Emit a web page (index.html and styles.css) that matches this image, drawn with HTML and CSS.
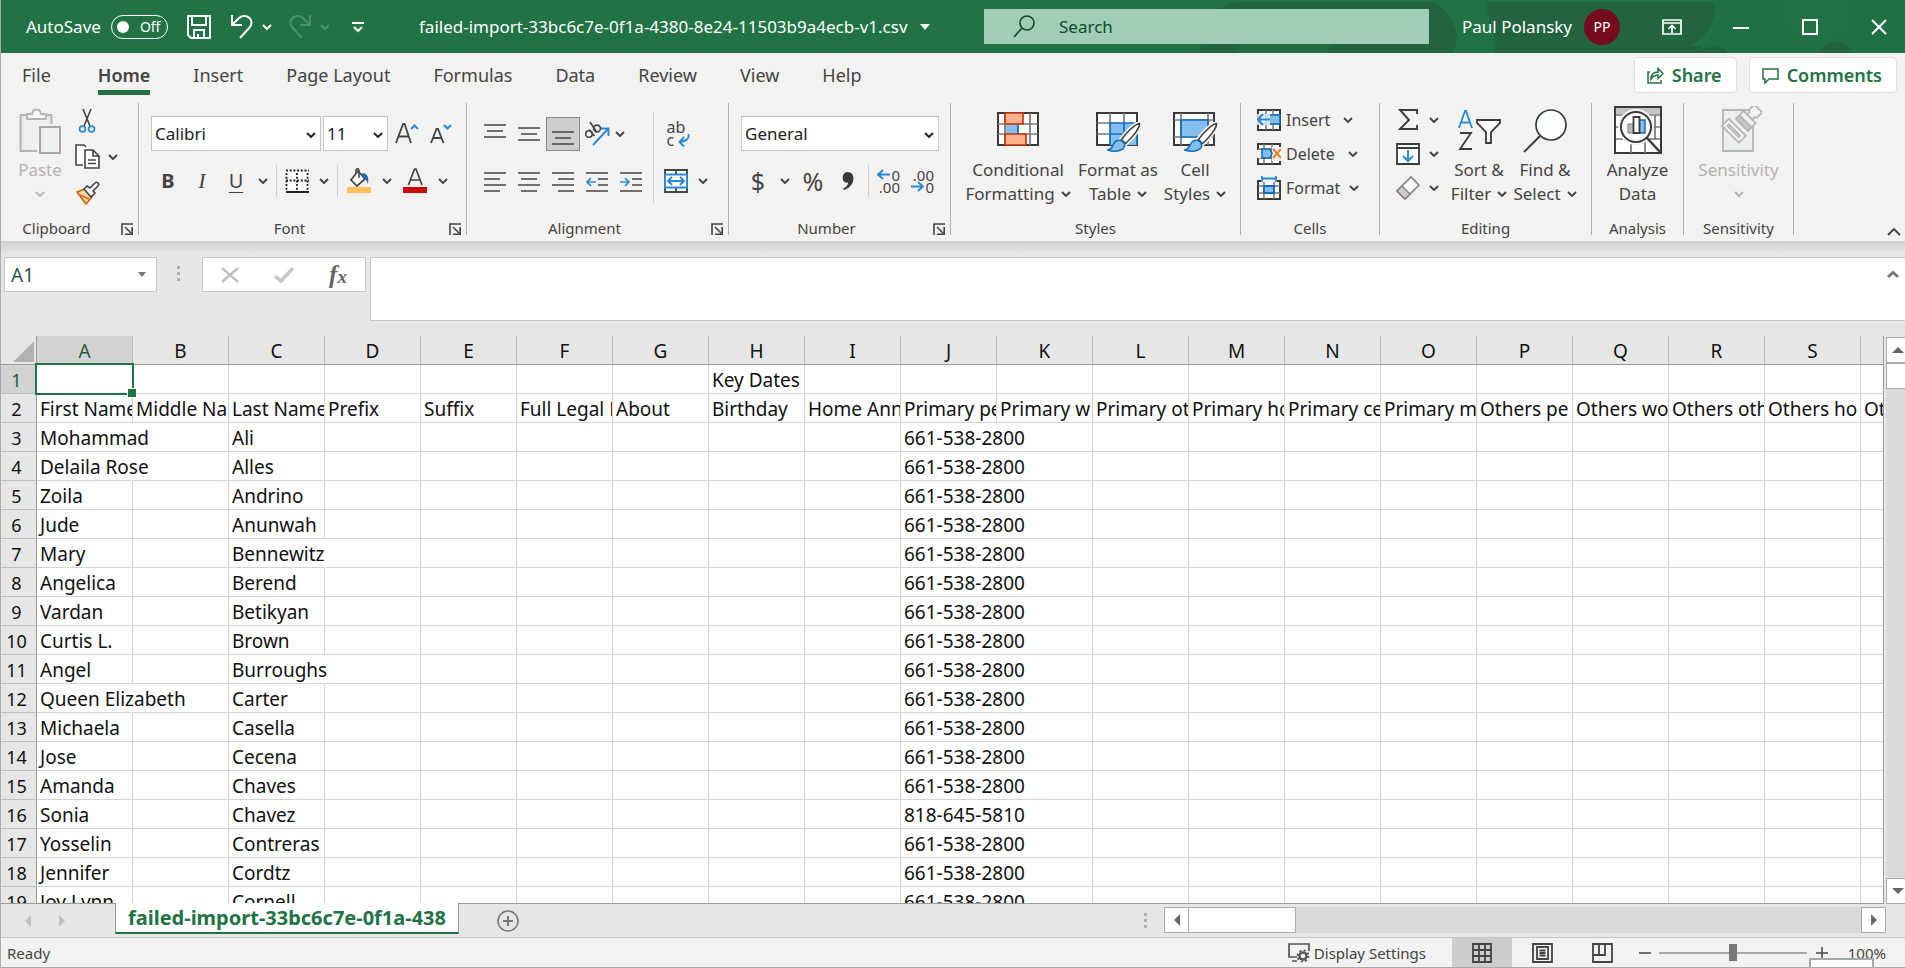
FILE: index.html
```html
<!DOCTYPE html>
<html lang="en">
<head>
<meta charset="utf-8">
<title>failed-import-33bc6c7e-0f1a-4380-8e24-11503b9a4ecb-v1.csv</title>
<link rel="stylesheet" href="styles.css">
</head>
<body>
<svg class="defs" aria-hidden="true">
  <symbol id="chev" viewBox="0 0 10 6"><path d="M1 1l4 4 4-4" fill="none" stroke="currentColor" stroke-width="1.9"/></symbol>
  <symbol id="launch" viewBox="0 0 12 12"><path d="M1 12V1h11M4 4l6 6M11.200 4v7.200H4" fill="none" stroke="currentColor" stroke-width="1.600"/></symbol>
  <symbol id="brush" viewBox="0 0 34 30"><path d="M32.500 1.500C28 2 19 11 14.500 17.500l4 4C25 16 33 6 32.500 1.500z" fill="#fff" stroke="#f3f2f1" stroke-width="5"/><path d="M32.500 1.500C28 2 19 11 14.500 17.500l4 4C25 16 33 6 32.500 1.500z" fill="#fff" stroke="#3b3a39" stroke-width="1.500"/><path d="M1 28c4-1 4-3 5.500-6 1.500-3.500 6-5 9-2.500 3.500 3 2.500 7-1.500 8.500-4 1.500-9 1.500-13 0z" fill="#83beec" stroke="#0f6cbd" stroke-width="1.500"/></symbol>
</svg>

<div class="window">
<header class="titlebar">
  <svg class="pattern" viewBox="0 0 745 51" preserveAspectRatio="none" aria-hidden="true">
    <path d="M38 51C50 35 20 20 75 0H275C300 20 300 40 292 51z" fill="#22643f"/>
    <path d="M75 51l12-16h85l-3 16z" fill="#217346" opacity=".5"/>
    <path d="M334 51C340 35 326 25 327 0H554C558 20 545 38 530 44H567V51z" fill="#22643f"/>
    <path d="M556 0h189v51H567c0-9-15-7-28-3 16-14 17-30 17-48z" fill="#216f44"/>
    <path d="M622 0h66c6 20-3 34-20 40-25 2-45-10-46-40z" fill="#217346"/>
    <path d="M660 51c6-15 26-15 34 0z" fill="#22643f"/>
  </svg>
  <div class="quick">
    <label class="autosave"><span>AutoSave</span><input type="checkbox" class="sr" aria-label="AutoSave"><span class="toggle"><i class="knob"></i>Off</span></label>
    <button class="tb save" aria-label="Save"><svg width="24" height="24" viewBox="0 0 24 24" fill="none" stroke="#fff" stroke-width="2"><path d="M1 1h22v22H4l-3-3zM5 1v9h14V1M7 23v-8h10v8M11 23v-4"/></svg></button>
    <button class="tb undo" aria-label="Undo"><svg width="24" height="26" viewBox="0 0 24 26" fill="none" stroke="#fff" stroke-width="2"><path d="M2 1v10h10M2 11l7-7c7-6 16 2 11 9L10 24"/></svg><svg class="chev"><use href="#chev"/></svg></button>
    <button class="tb redo" aria-label="Redo" disabled><svg width="24" height="26" viewBox="0 0 24 26" fill="none" stroke="currentColor" stroke-width="2"><path d="M22 1v10H12M22 11l-7-7C8-2-1 6 4 13l10 11"/></svg><svg class="chev"><use href="#chev"/></svg></button>
    <button class="tb" aria-label="Customize Quick Access Toolbar"><svg width="12" height="12" viewBox="0 0 12 12" fill="none" stroke="#fff" stroke-width="2"><path d="M0 2h12M2 6l4 4 4-4"/></svg></button>
  </div>
  <button class="doc">failed-import-33bc6c7e-0f1a-4380-8e24-11503b9a4ecb-v1.csv<svg width="10" height="6" viewBox="0 0 10 6"><path d="M0 0h10L5 6z" fill="#fff"/></svg></button>
  <label class="search"><svg width="22" height="24" viewBox="0 0 22 24" fill="none" stroke="#0e4a2b" stroke-width="1.600"><circle cx="14" cy="8" r="7"/><path d="M9 13L1 22"/></svg><input type="text" placeholder="Search" aria-label="Search"></label>
  <div class="account">
    <span>Paul Polansky</span><span class="avatar">PP</span>
    <button class="wc" aria-label="Ribbon Display Options"><svg width="20" height="16" viewBox="0 0 20 16" fill="none" stroke="#fff" stroke-width="2"><path d="M1 1h18v14H1zM1 4h18M10 14V7M6.500 10L10 6.500l3.500 3.500" stroke-width="1.700"/></svg></button>
    <button class="wc" aria-label="Minimize"><svg width="16" height="16" viewBox="0 0 16 16"><path d="M0 9h16" stroke="#fff" stroke-width="2"/></svg></button>
    <button class="wc" aria-label="Maximize"><svg width="16" height="16" viewBox="0 0 16 16"><path d="M1 1h14v14H1z" stroke="#fff" stroke-width="2" fill="none"/></svg></button>
    <button class="wc" aria-label="Close"><svg width="16" height="16" viewBox="0 0 16 16"><path d="M1 1l14 14M15 1L1 15" stroke="#fff" stroke-width="2"/></svg></button>
  </div>
</header>

<nav class="tabs">
  <button>File</button><button class="on">Home</button><button>Insert</button><button>Page Layout</button><button>Formulas</button><button>Data</button><button>Review</button><button>View</button><button>Help</button>
  <div class="actions">
    <button class="act"><svg width="17" height="17" viewBox="0 0 17 17" fill="none" stroke="#217346" stroke-width="1.500"><path d="M3 5H1v11h13v-3M4 12c0-5 3-7 7-7V1.500l5 5-5 5V8c-3 0-5 1-7 4z"/></svg>Share</button>
    <button class="act"><svg width="17" height="17" viewBox="0 0 17 17" fill="none" stroke="#217346" stroke-width="1.500"><path d="M1 2h15v10H7l-4 4v-4H1z"/></svg>Comments</button>
  </div>
</nav>

<div class="ribbon">
  <section class="group clipboard">
    <div class="body">
      <button class="big paste" disabled><svg width="42" height="46" viewBox="0 0 42 46"><path d="M1.500 7h31v36h-31z" fill="#e4e6e6" stroke="#b5b5b5" stroke-width="2"/><path d="M4 10h26v31H4z" fill="#edf0f0"/><path d="M8 11V6h5c1-6 8-6 9 0h5v5z" fill="#f7f7f7" stroke="#b5b5b5" stroke-width="1.800"/><path d="M18 16h25v30H18z" fill="#f3f2f1"/><path d="M21 19h20v26H21z" fill="#edf0f0" stroke="#a5a5a5" stroke-width="2"/></svg><span>Paste</span><svg class="chev"><use href="#chev"/></svg></button>
      <div class="trio">
        <button aria-label="Cut"><svg width="24" height="26" viewBox="0 0 24 26" fill="none"><path d="M8 1l7 17M16 1L9 18" stroke="#444" stroke-width="1.600"/><circle cx="7.500" cy="21" r="2.900" stroke="#2b88d8" stroke-width="1.700"/><circle cx="16.500" cy="21" r="2.900" stroke="#2b88d8" stroke-width="1.700"/></svg></button>
        <button aria-label="Copy"><svg width="25" height="26" viewBox="0 0 25 26" fill="#fff" stroke="#444" stroke-width="1.600"><path d="M8 21H1V1h8l2 2"/><path d="M10 6h8l6 6v12H10zM18 6v6h6M13 16h8M13 19.500h8"/></svg><svg class="chev"><use href="#chev"/></svg></button>
        <button aria-label="Format Painter"><svg width="25" height="24" viewBox="0 0 25 24"><path d="M2 11l8-3 7 8-6 7z" fill="#fbd9a8" stroke="#c8690c" stroke-width="1.600"/><path d="M5 14l9 4" stroke="#c8690c" stroke-width="1.500"/><path d="M9 8l3-3 3 2 5-5c2-2 5 1 3 3l-5 5 2 2-4 4z" fill="#fff" stroke="#444" stroke-width="1.600"/></svg></button>
      </div>
    </div>
    <footer>Clipboard<button class="launch" aria-label="Clipboard settings"><svg><use href="#launch"/></svg></button></footer>
  </section>

  <section class="group font">
    <div class="body rows">
      <div class="row">
        <span class="combo fam"><select aria-label="Font"><option>Calibri</option></select><svg class="chev"><use href="#chev"/></svg></span>
        <span class="combo size"><select aria-label="Font size"><option>11</option></select><svg class="chev"><use href="#chev"/></svg></span>
        <button class="w34" aria-label="Increase Font Size"><svg width="24" height="24" viewBox="0 0 24 24" fill="none"><path d="M1 21L8 2h1.500L16 21M3.500 14.500h10.500" stroke="#444" stroke-width="1.800"/><path d="M16 7l3.500-3.500L23 7" stroke="#2b88d8" stroke-width="2"/></svg></button>
        <button class="w34" aria-label="Decrease Font Size"><svg width="24" height="24" viewBox="0 0 24 24" fill="none"><path d="M2 21L7.500 7H9l5.500 14M4 16h9" stroke="#444" stroke-width="1.800"/><path d="M15 3l3.500 3.500L22 3" stroke="#2b88d8" stroke-width="2"/></svg></button>
      </div>
      <div class="row">
        <button class="w34 gb" aria-label="Bold"><b>B</b></button><button class="w34 gi" aria-label="Italic"><i>I</i></button><button class="w34 gu" aria-label="Underline"><u>U</u></button>
        <button class="w20" aria-label="Underline options"><svg class="chev"><use href="#chev"/></svg></button><i class="sep"></i>
        <button class="w34" aria-label="Borders"><svg width="24" height="24" viewBox="0 0 24 24" fill="none" stroke="#222" stroke-width="1.800"><path d="M1 1h22v20H1z" fill="#fff" stroke="none"/><path d="M1 1.500h23M1.500 4v17M22.500 4v17M12 4v17M1 11.500h23" stroke-dasharray="2 1.700"/><path d="M1 23h23" stroke-width="2"/></svg></button>
        <button class="w20" aria-label="Border options"><svg class="chev"><use href="#chev"/></svg></button><i class="sep"></i>
        <button class="w36" aria-label="Fill Color"><svg width="24" height="25" viewBox="0 0 24 25"><path d="M11 3l7 8-8 7-6-6z" fill="#fff" stroke="#444" stroke-width="1.700"/><path d="M12 10V3c0-3-3-3-3 0v3" fill="none" stroke="#444" stroke-width="1.500"/><path d="M15 5c6 0 7 5 6 11-2-4-2-6-5-7z" fill="#0f6cbd"/><path d="M0 19h24v6H0z" fill="#ffbf5b"/></svg></button>
        <button class="w20" aria-label="Fill options"><svg class="chev"><use href="#chev"/></svg></button>
        <button class="w36" aria-label="Font Color"><svg width="24" height="25" viewBox="0 0 24 25"><path d="M5.500 17L11.500 1h1.500l6 16M7.500 12h9" fill="none" stroke="#444" stroke-width="1.700"/><path d="M0 19h24v6H0z" fill="#c80b0b"/></svg></button>
        <button class="w20" aria-label="Font color options"><svg class="chev"><use href="#chev"/></svg></button>
      </div>
    </div>
    <footer>Font<button class="launch" aria-label="Font settings"><svg><use href="#launch"/></svg></button></footer>
  </section>

  <section class="group align">
    <div class="body">
      <div class="rows">
      <div class="row">
        <button class="w34" aria-label="Top Align"><svg class="ln" viewBox="0 0 22 22"><path d="M0 2h22M3 8h16M0 14h22"/></svg></button>
        <button class="w34" aria-label="Middle Align"><svg class="ln" viewBox="0 0 22 22"><path d="M0 5h22M3 11h16M0 17h22"/></svg></button>
        <button class="w34 sel" aria-label="Bottom Align"><svg class="ln" viewBox="0 0 22 22"><path d="M0 9h22M3 15h16M0 21h22"/></svg></button>
        <button class="w34" aria-label="Orientation"><svg width="26" height="26" viewBox="0 0 26 26" fill="none"><g stroke="#444" stroke-width="1.600"><circle cx="5" cy="13" r="3.300"/><path d="M5 8.500l5.500 6.500"/><circle cx="13" cy="7.500" r="3.400"/><path d="M6 1l6 9"/></g><path d="M9 24L24 8M17 7.500h7.500V15" stroke="#2b88d8" stroke-width="1.900"/></svg></button>
        <button class="w12" aria-label="Orientation options"><svg class="chev"><use href="#chev"/></svg></button>
      </div>
      <div class="row">
        <button class="w34" aria-label="Align Left"><svg class="ln" viewBox="0 0 22 22"><path d="M0 3h22M0 9h16M0 15h22M0 21h16"/></svg></button>
        <button class="w34" aria-label="Center"><svg class="ln" viewBox="0 0 22 22"><path d="M0 3h22M3 9h16M0 15h22M3 21h16"/></svg></button>
        <button class="w34" aria-label="Align Right"><svg class="ln" viewBox="0 0 22 22"><path d="M0 3h22M6 9h16M0 15h22M6 21h16"/></svg></button>
        <button class="w34" aria-label="Decrease Indent"><svg class="ln" viewBox="0 0 22 22"><path d="M0 3h22M12 9h10M12 15h10M0 21h22"/><path class="bl" d="M10 12H1M5 8l-4 4 4 4"/></svg></button>
        <button class="w34" aria-label="Increase Indent"><svg class="ln" viewBox="0 0 22 22"><path d="M0 3h22M12 9h10M12 15h10M0 21h22"/><path class="bl" d="M0 12h9M5 8l4 4-4 4"/></svg></button>
      </div>
      </div>
      <i class="sep tall"></i>
      <div class="rows">
      <div class="row">
        <button class="w34 wrap" aria-label="Wrap Text"><span>ab<br>c</span><svg width="12" height="14" viewBox="0 0 12 14" fill="none" stroke="#2b88d8" stroke-width="1.900"><path d="M10.500 0c1 5-2 7-9 8M6 3L1.500 8 6 12.500"/></svg></button>
      </div>
      <div class="row">
        <button class="w34" aria-label="Merge and Center"><svg width="24" height="24" viewBox="0 0 24 24" fill="#fff"><path d="M1 1h22v22H1zM12 1v22" stroke="#444" stroke-width="1.900"/><path d="M1 5.500h22v13H1z" stroke="#2b88d8" stroke-width="1.900"/><path d="M4 12h16M8 8l-4 4 4 4M16 8l4 4-4 4" fill="none" stroke="#2b88d8" stroke-width="1.900"/></svg></button>
        <button class="w20" aria-label="Merge options"><svg class="chev"><use href="#chev"/></svg></button>
      </div>
      </div>
    </div>
    <footer>Alignment<button class="launch" aria-label="Alignment settings"><svg><use href="#launch"/></svg></button></footer>
  </section>

  <section class="group number">
    <div class="body rows">
      <div class="row"><span class="combo fmt"><select aria-label="Number format"><option>General</option></select><svg class="chev"><use href="#chev"/></svg></span></div>
      <div class="row">
        <button class="w34 gs" aria-label="Accounting">$</button><button class="w20" aria-label="Accounting options"><svg class="chev"><use href="#chev"/></svg></button>
        <button class="w36 gs" aria-label="Percent">%</button>
        <button class="w34" aria-label="Comma"><svg width="14" height="20" viewBox="0 0 14 20"><path d="M6.500 1C15 1 15 15 3 19l-1-1.500c4-1.500 5-4 5-6C0 13 0 1 6.500 1z" fill="#3b3a39"/></svg></button><i class="sep"></i>
        <button class="w34 dec" aria-label="Increase Decimal"><span class="r"><svg width="14" height="11" viewBox="0 0 14 11"><path d="M13 5.500H1M6 1L1 5.500 6 10" fill="none" stroke="#2b88d8" stroke-width="1.900"/></svg>0</span><span class="r">.00</span></button>
        <button class="w34 dec" aria-label="Decrease Decimal"><span class="r">.00</span><span class="r"><svg width="14" height="11" viewBox="0 0 14 11"><path d="M0 5.500h12M7 1l5 4.500L7 10" fill="none" stroke="#2b88d8" stroke-width="1.900"/></svg>0</span></button>
      </div>
    </div>
    <footer>Number<button class="launch" aria-label="Number settings"><svg><use href="#launch"/></svg></button></footer>
  </section>

  <section class="group styles">
    <div class="body">
      <button class="big w112"><svg width="46" height="46" viewBox="0 0 46 46"><path d="M3 5h40v32H3z" fill="#fff" stroke="#3b3a39" stroke-width="2"/><path d="M3 16h40M3 26h40M10 5v32M35 5v32" stroke="#777" stroke-width="1.700"/><path d="M10 5h18v11H10zM10 26h21v11H10z" fill="#ffb08c" stroke="#c9330c" stroke-width="1.700"/><path d="M11 17h12v8H11z" fill="#83beec"/><path d="M23 16v10" stroke="#0f6cbd" stroke-width="1.700"/></svg><span>Conditional</span><span>Formatting <svg class="chev"><use href="#chev"/></svg></span></button>
      <button class="big w88"><svg width="46" height="46" viewBox="0 0 46 46"><path d="M2 5h40v32H2z" fill="#fff" stroke="#3b3a39" stroke-width="2"/><path d="M15 15h27v22H15z" fill="#83beec"/><path d="M2 15h13M2 26h13M15 5v10M29 5v10" stroke="#777" stroke-width="1.700"/><path d="M15 37V15h27v22M15 26h27M29 15v22" fill="none" stroke="#0f6cbd" stroke-width="1.700"/><use href="#brush" x="12" y="14" width="34" height="30"/></svg><span>Format as</span><span>Table <svg class="chev"><use href="#chev"/></svg></span></button>
      <button class="big w66"><svg width="46" height="46" viewBox="0 0 46 46"><path d="M2 5h40v32H2z" fill="#fff" stroke="#3b3a39" stroke-width="2"/><path d="M2 12h40M2 29h40M9 5v32M36 5v32" stroke="#777" stroke-width="1.700"/><path d="M9 12h27v17H9z" fill="#83beec" stroke="#0f6cbd" stroke-width="1.700"/><use href="#brush" x="12" y="14" width="34" height="30"/></svg><span>Cell</span><span>Styles <svg class="chev"><use href="#chev"/></svg></span></button>
    </div>
    <footer>Styles</footer>
  </section>

  <section class="group cells">
    <div class="body list">
      <button><svg width="24" height="22" viewBox="0 0 24 22"><path d="M1 1h22v20H1z" fill="#fff" stroke="#3b3a39" stroke-width="2"/><path d="M1 15h22M9 1v20M16 1v20M1 6h22" stroke="#777" stroke-width="1.500"/><path d="M9 6h14v9H9z" fill="#83beec" stroke="#0f6cbd" stroke-width="1.600"/><path d="M0 5h13v11H0z" fill="#f3f2f1" opacity=".8"/><path d="M13 10.500H1M6 5l-5 5.500L6 16" fill="none" stroke="#2b88d8" stroke-width="2"/></svg><span>Insert</span><svg class="chev far"><use href="#chev"/></svg></button>
      <button><svg width="24" height="22" viewBox="0 0 24 22"><path d="M1 1h22v20H1z" fill="#fff" stroke="#3b3a39" stroke-width="2"/><path d="M1 6h22M1 15h22M7 1v20M15 1v20" stroke="#777" stroke-width="1.500"/><path d="M0 7h4v8H0zM15 4h9v14h-9z" fill="#f3f2f1"/><path d="M5 6h8l2 4.500-2 4.500H5z" fill="#83beec" stroke="#0f6cbd" stroke-width="1.600"/><path d="M16 6l8 9M24 6l-8 9" stroke="#e8822a" stroke-width="2"/></svg><span>Delete</span><svg class="chev far"><use href="#chev"/></svg></button>
      <button><svg width="24" height="24" viewBox="0 0 24 24"><path d="M1 5h22v18H1z" fill="#fff" stroke="#3b3a39" stroke-width="2"/><path d="M4 0h16v6H4z" fill="#f3f2f1"/><path d="M1 10h22M1 17h22M7 6v17M17 6v17" stroke="#777" stroke-width="1.500"/><path d="M7 10h10v7H7z" fill="#83beec" stroke="#0f6cbd" stroke-width="1.800"/><path d="M5 0v6M19 0v6M5 2.500h14" stroke="#2b88d8" stroke-width="1.800"/></svg><span>Format</span><svg class="chev"><use href="#chev"/></svg></button>
    </div>
    <footer>Cells</footer>
  </section>

  <section class="group editing">
    <div class="body">
      <div class="list">
        <button aria-label="AutoSum"><svg width="24" height="24" viewBox="0 0 24 24"><path d="M21 6V2H4l9 10L4 21h17v-4" fill="none" stroke="#3b3a39" stroke-width="1.900"/></svg><svg class="chev"><use href="#chev"/></svg></button>
        <button aria-label="Fill"><svg width="24" height="22" viewBox="0 0 24 22"><path d="M1 1h22v20H1zM1 5h22" fill="#fff" stroke="#3b3a39" stroke-width="1.800"/><path d="M12 7v11M7 13l5 5 5-5" fill="none" stroke="#2b88d8" stroke-width="2"/></svg><svg class="chev"><use href="#chev"/></svg></button>
        <button aria-label="Clear"><svg width="24" height="24" viewBox="0 0 24 24"><path d="M1 15L15 1l8 8L9 23z" fill="#fff" stroke="#8a8086" stroke-width="1.700"/><path d="M1 15l5-5 8 8-5 5z" fill="#cfc8cd" stroke="#8a8086" stroke-width="1.500"/></svg><svg class="chev"><use href="#chev"/></svg></button>
      </div>
      <button class="big w66"><svg width="46" height="46" viewBox="0 0 46 46" fill="none"><path d="M3 20L9 3h1l6 17M5 14.500h9" stroke="#2b88d8" stroke-width="1.800"/><path d="M4 25h11L4 41h12" stroke="#3b3a39" stroke-width="1.800"/><path d="M21 12h23v3l-9 9v11h-5V24l-9-9z" fill="#fff" stroke="#3b3a39" stroke-width="1.800"/></svg><span>Sort &amp;</span><span>Filter <svg class="chev"><use href="#chev"/></svg></span></button>
      <button class="big w66"><svg width="46" height="46" viewBox="0 0 46 46"><circle cx="29" cy="17" r="15" fill="#fbffff" stroke="#3b3a39" stroke-width="1.700"/><path d="M18 28L2 44" stroke="#3b3a39" stroke-width="1.900"/></svg><span>Find &amp;</span><span>Select <svg class="chev"><use href="#chev"/></svg></span></button>
    </div>
    <footer>Editing</footer>
  </section>

  <section class="group analysis">
    <div class="body">
      <button class="big"><svg width="48" height="48" viewBox="0 0 48 48"><path d="M1 1h46v46H1z" fill="#fff" stroke="#3b3a39" stroke-width="2"/><path d="M2 2h44v6H2z" fill="#c2c2c2"/><path d="M2 9h44M2 21h44M2 33h44M17 33v14M31 33v14M41 9v25" stroke="#777" stroke-width="1.700"/><circle cx="22" cy="21" r="18" fill="#f3f2f1"/><circle cx="22" cy="21" r="15" fill="#fff" stroke="#3b3a39" stroke-width="2"/><path d="M33 32l14 15" stroke="#3b3a39" stroke-width="2.500"/><path d="M14 18h6v9h-6z" fill="#bbb" stroke="#777"/><path d="M25 14h6v13h-6z" fill="#83beec" stroke="#0f6cbd" stroke-width="1.500"/><path d="M19.500 11h6v16h-6z" fill="#fff" stroke="#3b3a39" stroke-width="1.800"/></svg><span>Analyze</span><span>Data</span></button>
    </div>
    <footer>Analysis</footer>
  </section>

  <section class="group sens">
    <div class="body">
      <button class="big" disabled><svg width="46" height="48" viewBox="0 0 46 48"><path d="M7 4h30v41H7z" fill="#ecefef" stroke="#b5b5b5" stroke-width="1.800"/><g transform="rotate(45 27 17)" fill="#f3f2f1" stroke="#b5b5b5" stroke-width="1.700"><path d="M14 24h24v10H14z"/><path d="M18 28h16v2H18z"/><path d="M19 8h17v11H19z"/><path d="M19 14h17v5H19z" fill="#c8c8c8"/><path d="M24 8V5l-2-2V-4h11v7l-2 2v3z"/></g></svg><span>Sensitivity</span><svg class="chev"><use href="#chev"/></svg></button>
    </div>
    <footer>Sensitivity</footer>
  </section>
  <button class="collapse" aria-label="Collapse the Ribbon"><svg width="14" height="9" viewBox="0 0 14 9"><path d="M1 8l6-6 6 6" fill="none" stroke="#444" stroke-width="1.900"/></svg></button>
</div>

<div class="fbar">
  <div class="namebox"><input type="text" value="A1" aria-label="Name Box"><button aria-label="Names"><svg width="8" height="5" viewBox="0 0 8 5"><path d="M0 0h8L4 5z" fill="#777"/></svg></button></div>
  <div class="dots"><i></i><i></i><i></i></div>
  <div class="fx">
    <button aria-label="Cancel"><svg width="18" height="16" viewBox="0 0 18 16"><path d="M1 1l16 14M17 1L1 15" stroke="#c0c0c0" stroke-width="2.500"/></svg></button>
    <button aria-label="Enter"><svg width="20" height="16" viewBox="0 0 20 16"><path d="M1 9l6 5L19 1" fill="none" stroke="#c6c8c8" stroke-width="3.500"/></svg></button>
    <button class="fn" aria-label="Insert Function"><i>f<small>x</small></i></button>
  </div>
  <div class="formula"><textarea aria-label="Formula bar"></textarea><button aria-label="Collapse formula bar"><svg width="12" height="9" viewBox="0 0 12 9"><path d="M1 7l5-4.500L11 7" fill="none" stroke="#777" stroke-width="3"/></svg></button></div>
</div>

<main class="sheet">
  <div class="grid"><table><thead><tr id="letters"></tr></thead><tbody id="rows"></tbody></table></div>
  <div class="vscroll">
    <button aria-label="Scroll up"><svg width="12" height="6" viewBox="0 0 12 6"><path d="M0 6h12L6 0z" fill="#666"/></svg></button>
    <div class="thumb"></div><div class="track"></div>
    <button aria-label="Scroll down"><svg width="12" height="6" viewBox="0 0 12 6"><path d="M0 0h12L6 6z" fill="#666"/></svg></button>
  </div>
</main>

<div class="sheetbar">
  <div class="nav"><button aria-label="Previous sheet"><svg width="6" height="12" viewBox="0 0 6 12"><path d="M6 0v12L0 6z" fill="#bfbfbf"/></svg></button><button aria-label="Next sheet"><svg width="6" height="12" viewBox="0 0 6 12"><path d="M0 0v12l6-6z" fill="#bfbfbf"/></svg></button></div>
  <button class="sheettab">failed-import-33bc6c7e-0f1a-438</button>
  <button class="add" aria-label="New sheet"><svg width="22" height="22" viewBox="0 0 22 22" fill="none" stroke="#777"><circle cx="11" cy="11" r="10" stroke-width="1.500"/><path d="M11 6v10M6 11h10" stroke-width="2"/></svg></button>
  <div class="dots"><i></i><i></i><i></i></div>
  <div class="hscroll">
    <button aria-label="Scroll left"><svg width="6" height="12" viewBox="0 0 6 12"><path d="M6 0v12L0 6z" fill="#666"/></svg></button>
    <div class="thumb"></div><div class="track"></div>
    <button aria-label="Scroll right"><svg width="6" height="12" viewBox="0 0 6 12"><path d="M0 0v12l6-6z" fill="#666"/></svg></button>
  </div>
</div>

<footer class="status">
  <span>Ready</span>
  <button class="disp"><svg width="22" height="20" viewBox="0 0 22 20" fill="none" stroke="#555" stroke-width="1.700"><path d="M9 14H1V1h20v7M4 18h5"/><circle cx="15" cy="13" r="3.600" stroke-width="2.500"/><circle cx="15" cy="13" r="5.600" stroke-dasharray="2 2.400"/></svg>Display Settings</button>
  <button class="view on" aria-label="Normal"><svg width="20" height="20" viewBox="0 0 20 20" fill="none" stroke="#444" stroke-width="1.800"><path d="M1 1h18v18H1zM1 7h18M1 13h18M7 1v18M13 1v18"/></svg></button>
  <button class="view" aria-label="Page Layout View"><svg width="21" height="20" viewBox="0 0 21 20" fill="none" stroke="#444" stroke-width="1.800"><path d="M1 1h19v18H1zM5 4h11v12H5zM7.500 7.500h6M7.500 10h6M7.500 12.500h6"/></svg></button>
  <button class="view" aria-label="Page Break Preview"><svg width="21" height="20" viewBox="0 0 21 20" fill="none" stroke="#444" stroke-width="1.800"><path d="M1 1h19v18H1zM1 12h12V1M7 1v11"/></svg></button>
  <button class="zb" aria-label="Zoom out"><svg width="12" height="12" viewBox="0 0 12 12"><path d="M0 6h12" stroke="#444" stroke-width="1.500"/></svg></button>
  <input class="zoom" type="range" min="0" max="100" value="50" aria-label="Zoom">
  <button class="zb" aria-label="Zoom in"><svg width="12" height="12" viewBox="0 0 12 12"><path d="M0 6h12M6 0v12" stroke="#444" stroke-width="1.500"/></svg></button>
  <button class="pct">100%</button>
  <div class="popup"></div>
</footer>
</div>
<script src="script.js"></script>
</body>
</html>
```

FILE: styles.css
```css
* { box-sizing: border-box; }
body { margin: 0; font-family: "Noto Sans", "Open Sans", sans-serif; font-size: 17px; color: #444; }
button, input, select, textarea { font: inherit; color: inherit; border: 0; background: none; padding: 0; margin: 0; outline: 0; }
button { display: flex; align-items: center; justify-content: center; white-space: nowrap; }
svg { display: block; flex: none; }
.defs { position: absolute; width: 0; height: 0; }
.sr { position: absolute; opacity: 0; }
.window { height: 100vh; display: flex; flex-direction: column; overflow: hidden; background: #e6e6e6; border-left: 1px solid #ababab; border-bottom: 1px solid #ababab; }
.chev { width: 10px; height: 6px; }

.titlebar { height: 53px; flex: none; display: flex; align-items: center; background: #217346; color: #fff; position: relative; }
.titlebar > * { position: relative; }
.titlebar > .pattern { position: absolute; right: 0; bottom: 0; width: 745px; height: 51px; }
.quick { width: 418px; display: flex; align-items: center; padding-left: 25px; }
.autosave { display: flex; align-items: center; gap: 10px; }
.toggle { width: 57px; height: 24px; border: 1px solid #fff; border-radius: 12px; display: flex; align-items: center; gap: 11px; padding-left: 5px; font-size: 14px; }
.knob { width: 12px; height: 12px; border-radius: 6px; background: #fff; }
.tb { gap: 8px; margin-left: 19px; }
.redo { color: #4d8f6b; margin-left: 16px; }
.redo + .tb { margin-left: 22px; }
.doc { gap: 12px; }
.search { width: 445px; height: 35px; margin-left: auto; background: #a0cdb5; display: flex; align-items: center; gap: 24px; padding-left: 29px; }
.search input { width: 300px; color: #0e4a2b; }
.search input::placeholder { color: #0e4a2b; opacity: 1; }
.account { display: flex; align-items: center; width: 476px; padding-left: 33px; }
.avatar { width: 36px; height: 36px; border-radius: 18px; background: #750b1c; display: flex; align-items: center; justify-content: center; font-size: 14px; margin: 0 auto 0 12px; }
.wc { width: 69px; height: 50px; padding-left: 16px; }

.tabs { height: 44px; flex: none; display: flex; background: #f3f2f1; padding: 0 8px 0 21px; gap: 43px; font-size: 18px; }
.tabs > button { height: 42px; border-bottom: 5px solid transparent; padding-top: 7px; }
.tabs > .on { font-weight: 600; border-color: #217346; margin-left: 4px; }
.actions { margin-left: auto; display: flex; gap: 12px; padding-top: 4px; }
.act { height: 36px; background: #fff; border: 1px solid #e1dfdd; border-radius: 4px; color: #217346; font-weight: 600; gap: 8px; padding: 0 14px 0 12px; }

.ribbon { height: 144px; flex: none; display: flex; background: #f3f2f1; padding: 6px 0; position: relative; }
.group { flex: none; display: flex; flex-direction: column; border-right: 1px solid #b3b0ad; position: relative; height: 132px; }
.group footer { height: 14px; margin-top: auto; line-height: 14px; text-align: center; font-size: 15px; position: relative; }
.clipboard footer, .font footer, .align footer, .number footer { padding-right: 26px; }
.launch { position: absolute; right: 5px; bottom: 0; }
.launch svg { width: 12px; height: 12px; }
.body { display: flex; height: 106px; }
.rows { display: flex; flex-direction: column; padding-top: 13px; gap: 12px; }
.row { display: flex; height: 35px; align-items: center; }
.row > button { height: 34px; }
.w12 { width: 12px; } .w20 { width: 20px; } .w34 { width: 34px; } .w36 { width: 36px; }
.w66 { width: 66px; } .w88 { width: 88px; } .w112 { width: 112px; }
.sep { width: 1px; height: 32px; background: #d2d0ce; margin: 0 3px; }
.sep.tall { height: 91px; margin: 9px 5px 0 5px; }
.ln { width: 22px; height: 22px; fill: none; stroke: #444; stroke-width: 1.700; }
.bl { stroke: #2b88d8; }
.big { flex-direction: column; justify-content: flex-start; height: 106px; line-height: 24px; padding-top: 5px; }
.big > svg:first-child { margin-bottom: 4px; }
.big > span { display: flex; align-items: center; gap: 6px; height: 24px; }
.big:disabled { color: #b5b3b1; }
.big > .chev { margin-top: 9px; }

.clipboard { width: 138px; }
.paste { width: 48px; margin-left: 15px; }
.trio { display: flex; flex-direction: column; padding: 4px 0 0 11px; gap: 9px; }
.trio button { gap: 8px; height: 27px; justify-content: flex-start; }
.font { width: 328px; }
.font .row { padding-left: 12px; }
.combo { position: relative; height: 35px; background: #fff; border: 1px solid #c8c6c4; display: flex; color: #222; }
.combo select { appearance: none; width: 100%; padding-left: 3px; }
.combo .chev { position: absolute; right: 4px; top: 15px; pointer-events: none; }
.fam { width: 170px; } .size { width: 65px; margin: 0 2px; }
.gb, .gi, .gu { font-size: 20px; }
.gi { font-family: "Liberation Serif", serif; font-size: 22px; }
.gu u { text-underline-offset: 4px; text-decoration-thickness: 1px; }
.align { width: 262px; }
.align .body { padding-left: 11px; }
.sel { background: #d0cecd; border: 1px solid #8a8886; }
.wrap { position: relative; font-size: 16px; line-height: 13px; text-align: left; }
.wrap svg { position: absolute; right: 3px; bottom: 3px; }
.number { width: 222px; }
.number .row { padding-left: 12px; }
.fmt { width: 198px; }
.gs { font-size: 25px; }
.dec { flex-direction: column; align-items: flex-end; padding-right: 6px; font-size: 15px; line-height: 12px; }
.r { display: flex; align-items: center; justify-content: flex-end; height: 12px; }
.styles { width: 290px; }
.styles .body { padding-left: 11px; }
.cells { width: 139px; }
.list { display: flex; flex-direction: column; padding-top: 2px; gap: 5px; }
.list button { height: 29px; justify-content: flex-start; gap: 9px; }
.cells .list { padding-left: 16px; font-size: 16px; }
.cells .list svg:first-child { margin-right: -4px; }
.cells .far { margin-left: 4px; }
.editing { width: 212px; }
.editing .list { width: 50px; }
.editing .body { padding-left: 16px; }
.analysis { width: 92px; }
.analysis .big, .sens .big { width: 100%; padding-top: 3px; }
.sens { width: 110px; }
.collapse { position: absolute; right: 4px; bottom: 5px; }

.fbar { flex: none; height: 95px; padding: 16px 0 0 3px; display: flex; align-items: flex-start; background: linear-gradient(#cfcfcf, #e6e6e6 12px); }
.namebox { width: 153px; height: 35px; background: #fff; border: 1px solid #c6c6c6; display: flex; padding: 0 10px 0 6px; font-size: 19px; color: #35524a; }
.namebox input { flex: 1; min-width: 0; }
.dots { display: flex; flex-direction: column; gap: 3px; margin: 9px 22px 0 20px; }
.dots i { width: 3px; height: 3px; background: #b0b0b0; }
.fx { width: 164px; height: 35px; background: #fff; border: 1px solid #c6c6c6; display: grid; grid-template-columns: repeat(3, 1fr); }
.fn { font: italic 700 25px "Liberation Serif", serif; color: #666; }
.fn small { font-size: 19px; }
.formula { flex: 1; height: 64px; margin-left: 4px; background: #fff; border: 1px solid #c6c6c6; border-right: 0; display: flex; align-items: flex-start; padding: 12px 6px 0 4px; }
.formula textarea { flex: 1; height: 40px; resize: none; }

.sheet { flex: 1; min-height: 0; display: flex; }
.grid { flex: 1; min-width: 0; overflow: hidden; background: #e6e6e6; border-right: 1px solid #9b9b9b; border-bottom: 1px solid #9b9b9b; }
table { width: 1956px; table-layout: fixed; border-collapse: separate; border-spacing: 0; font-size: 19px; line-height: 26px; color: #111; background: #fff; }
th { font-weight: 400; height: 29px; padding: 2px 0 0; background: #e6e6e6; }
thead th { width: 96px; border-bottom: 1px solid #9b9b9b; border-right: 1px solid #bdbdbd; }
thead th:first-child { width: 36px; border-right-color: #9b9b9b; }
thead svg { margin: 1px 0 0 12px; }
tbody th { border-right: 1px solid #9b9b9b; border-bottom: 1px solid #bdbdbd; font-size: 18px; padding-right: 4px; }
th.cur { background: #d2d2d2; color: #215c40; }
td { height: 29px; padding: 2px 0 0 3px; border-right: 1px solid #d4d4d4; border-bottom: 1px solid #d4d4d4; white-space: nowrap; overflow: hidden; }
td.spill { overflow: visible; border-right-color: transparent; }
td.active { position: relative; overflow: visible; }
.box { position: absolute; inset: -2px; border: 2px solid #217346; }
.box::after { content: ""; position: absolute; right: -4px; bottom: -4px; width: 8px; height: 8px; background: #217346; border: 1px solid #fff; border-width: 1px 0 0 1px; }
.vscroll { width: 21px; margin-left: 2px; margin-right: -2px; display: flex; flex-direction: column; background: #dadada; margin-top: 1px; }
.vscroll button, .vscroll .thumb { height: 26px; flex: none; background: #fff; border: 1px solid #ababab; padding-left: 5px; justify-content: flex-start; }
.track { flex: 1; }

.sheetbar { flex: none; height: 34px; display: flex; border-bottom: 1px solid #c6c6c6; }
.nav { display: flex; width: 114px; padding-left: 24px; gap: 28px; align-items: center; }
.sheettab { height: 31px; margin-top: -1px; background: #fff; border: 1px solid #9b9b9b; border-width: 0 1px 2px; border-bottom-color: #217346; color: #217346; font-size: 20px; font-weight: 700; padding: 0 12px; }
.add { margin: 0 auto 0 38px; }
.sheetbar .dots { margin: 9px 17px 0 0; }
.hscroll { width: 722px; height: 26px; margin: 3px 19px 0 0; display: flex; background: #dadada; }
.hscroll button { width: 25px; background: #fff; border: 1px solid #ababab; }
.hscroll .thumb { width: 107px; background: #fff; border: 1px solid #ababab; border-left: 0; }

.status { flex: none; height: 29px; display: flex; align-items: center; background: #f3f2f1; font-size: 15px; padding: 0 19px 0 6px; position: relative; }
.disp { margin-left: auto; margin-right: 26px; gap: 4px; }
.view { width: 60px; height: 29px; }
.view.on { background: #cfcdcb; }
.zb { width: 28px; height: 28px; margin-left: -1px; }
.zoom { appearance: none; width: 148px; height: 18px; margin: 0 2px 0 0; }
.zoom::-webkit-slider-runnable-track { height: 2px; background: #a8a8a8; }
.zoom::-webkit-slider-thumb { appearance: none; width: 8px; height: 17px; margin-top: -8px; background: #777; }
.pct { width: 45px; margin-left: 5px; justify-content: flex-end; }
.popup { position: absolute; right: 31px; bottom: 0; width: 65px; height: 9px; background: #fff; border: 2px solid #a3a9a6; border-bottom: 0; }
```

FILE: script.js
```js
const letters = "ABCDEFGHIJKLMNOPQRST".split("");
const phone = "661-538-2800";
const people = [
  ["Mohammad", "Ali"], ["Delaila Rose", "Alles"], ["Zoila", "Andrino"], ["Jude", "Anunwah"],
  ["Mary", "Bennewitz"], ["Angelica", "Berend"], ["Vardan", "Betikyan"], ["Curtis L.", "Brown"],
  ["Angel", "Burroughs"], ["Queen Elizabeth", "Carter"], ["Michaela", "Casella"], ["Jose", "Cecena"],
  ["Amanda", "Chaves"], ["Sonia", "Chavez", "818-645-5810"], ["Yosselin", "Contreras"],
  ["Jennifer", "Cordtz"], ["Joy Lynn", "Cornell"]
];
const rows = [
  { H: "Key Dates" },
  { A: "First Name", B: "Middle Na", C: "Last Name", D: "Prefix", E: "Suffix", F: "Full Legal N",
    G: "About", H: "Birthday", I: "Home Ann", J: "Primary pe", K: "Primary w",
    L: "Primary ot", M: "Primary ho", N: "Primary ce", O: "Primary m", P: "Others pe",
    Q: "Others wo", R: "Others oth", S: "Others ho", T: "Others" },
  ...people.map(p => ({ A: p[0], C: p[1], J: p[2] || phone }))
];

document.getElementById("letters").innerHTML =
  '<th><svg width="21" height="21" viewBox="0 0 21 21"><path d="M21 0v21H0z" fill="#b2b2b2"/></svg></th>' +
  letters.map((l, i) => `<th${i ? "" : ' class="cur"'}>${i < 19 ? l : ""}</th>`).join("");

document.getElementById("rows").innerHTML = rows.map((row, r) =>
  `<tr><th${r ? "" : ' class="cur"'}>${r + 1}</th>` +
  letters.map((l, c) => r === 0 && c === 0
    ? '<td class="active"><div class="box"></div></td>'
    : `<td>${row[l] || ""}</td>`).join("") + "</tr>").join("");

// Long text runs over an empty neighbour, which then has no left grid line.
document.querySelectorAll("#rows td").forEach(td => {
  const next = td.nextElementSibling;
  if (td.textContent && next && !next.textContent && td.scrollWidth > td.clientWidth) td.classList.add("spill");
});
```
